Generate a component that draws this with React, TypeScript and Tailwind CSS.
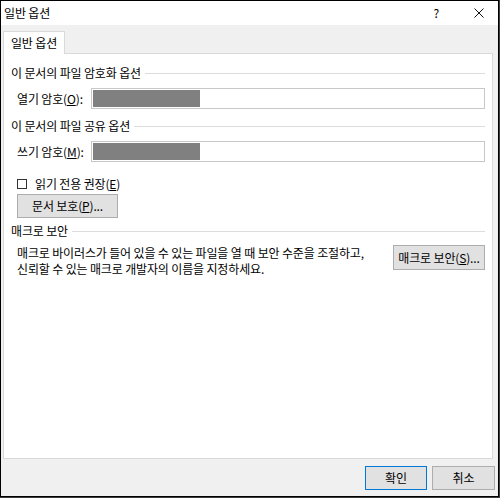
import React from "react";

const font = { fontFamily: '"Noto Sans CJK KR", "Noto Sans", sans-serif' };

function Header({ text, mt }: { text: string; mt: string }) {
  return (
    <div className={`flex items-center h-[16px] ${mt}`}>
      <span className="whitespace-nowrap">{text}</span>
      <div className="flex-1 h-px bg-[#dcdcdc] ml-[4px]" />
    </div>
  );
}

function PwRow({ label, ul, mt }: { label: string; ul: string; mt: string }) {
  return (
    <div className={`flex items-center ${mt}`}>
      <span className="w-[80px] pl-[6px] whitespace-nowrap">
        {label}(<span className="underline">{ul}</span>):
      </span>
      <div className="flex-1 h-[21px] border border-[#c8c8c8] bg-white p-px">
        <div className="w-[107px] h-full bg-[#808080]" />
      </div>
    </div>
  );
}

export default function App() {
  return (
    <div
      className="w-[500px] h-[498px] flex bg-[#3c3c3c] text-[12px] tracking-[-0.15px] leading-[16px] text-black"
      style={font}
    >
      <div className="w-[499px] h-[497px] border border-black bg-[#f0f0f0] flex flex-col">
        <div className="h-[24px] bg-white flex items-center pl-[3px] pr-[14px] shrink-0">
          <span>일반 옵션</span>
          <span className="ml-auto mr-[35px]">?</span>
          <svg width="10" height="10" viewBox="0 0 10 10" className="mt-[-1px]">
            <path d="M0.5 0.5 L9.5 9.5 M9.5 0.5 L0.5 9.5" stroke="#111" strokeWidth="1" fill="none" />
          </svg>
        </div>
        <div className="flex-1 flex flex-col pl-[2px] pr-[5px] pt-[6px]">
          <div className="flex">
            <div className="w-[62px] h-[23px] bg-white border border-b-0 border-[#d9d9d9] flex items-center justify-center -mb-px relative z-10">
              일반 옵션
            </div>
          </div>
          <div className="h-[406px] bg-white border border-[#d9d9d9] flex flex-col px-[7px]">
            <Header text="이 문서의 파일 암호화 옵션" mt="mt-[11px]" />
            <PwRow label="열기 암호" ul="O" mt="mt-[7px]" />
            <Header text="이 문서의 파일 공유 옵션" mt="mt-[9px]" />
            <PwRow label="쓰기 암호" ul="M" mt="mt-[7px]" />
            <div className="flex items-center mt-[14px] pl-[6px] h-[16px]">
              <div className="w-[10px] h-[10px] border border-[#333] bg-white" />
              <span className="ml-[8px]">
                읽기 전용 권장(<span className="underline">E</span>)
              </span>
            </div>
            <div className="pl-[6px] mt-[2px]">
              <div className="w-[101px] h-[24px] bg-[#e1e1e1] border border-[#adadad] flex items-center justify-center">
                문서 보호(<span className="underline">P</span>)...
              </div>
            </div>
            <Header text="매크로 보안" mt="mt-[5px]" />
            <div className="flex items-start mt-[6px] pl-[6px]">
              <div className="flex-1 flex flex-col gap-px">
                <div className="whitespace-nowrap h-[15px] leading-[15px]">매크로 바이러스가 들어 있을 수 있는 파일을 열 때 보안 수준을 조절하고,</div>
                <div className="whitespace-nowrap h-[15px] leading-[15px]">신뢰할 수 있는 매크로 개발자의 이름을 지정하세요.</div>
              </div>
              <div className="w-[92px] h-[25px] bg-[#e1e1e1] border border-[#adadad] flex items-center justify-center">
                매크로 보안(<span className="underline">S</span>)...
              </div>
            </div>
          </div>
          <div className="flex justify-end gap-[5px] mt-[7px] mr-[-2px]">
            <div className="w-[62px] h-[24px] bg-[#e1e1e1] border border-[#0078d7] flex items-center justify-center">확인</div>
            <div className="w-[63px] h-[24px] bg-[#e1e1e1] border border-[#adadad] flex items-center justify-center">취소</div>
          </div>
        </div>
      </div>
    </div>
  );
}
